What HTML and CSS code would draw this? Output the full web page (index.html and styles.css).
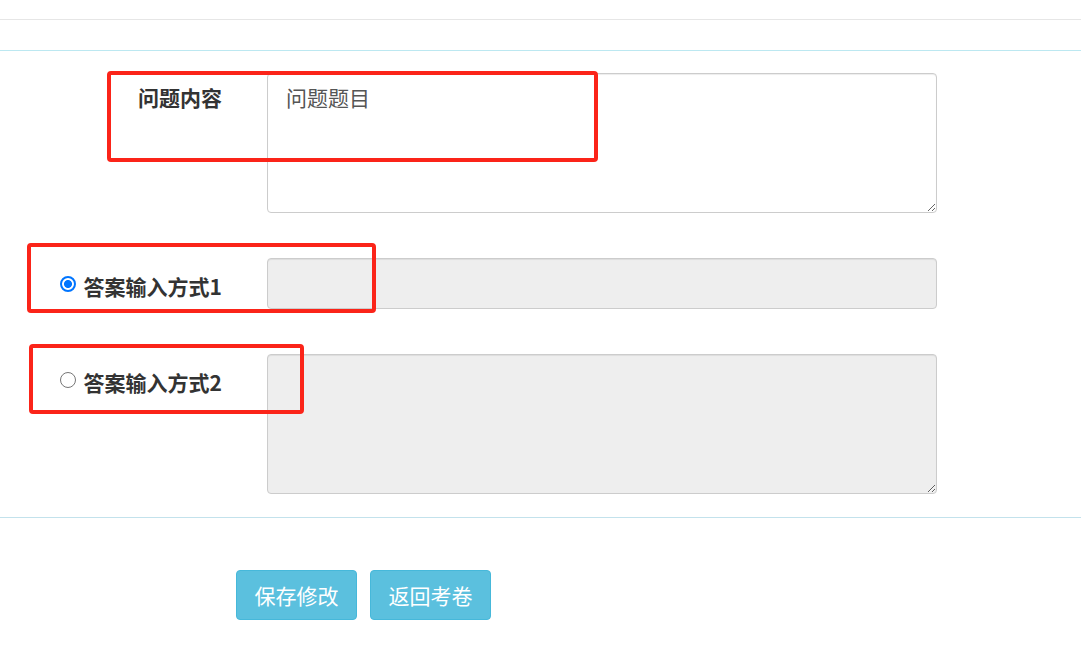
FILE: index.html
```html
<!DOCTYPE html>
<html lang="zh-CN">
<head>
<meta charset="utf-8">
<title>编辑问题</title>
<link rel="stylesheet" href="styles.css">
</head>
<body>
<div class="topbar"></div>
<div class="panel">
  <form class="form">
    <div class="row">
      <label class="label label-q">问题内容</label>
      <textarea class="field area">问题题目</textarea>
    </div>
    <div class="row">
      <label class="label label-r1"><input type="radio" name="mode" class="radio" checked><span>答案输入方式1</span></label>
      <input type="text" class="field line gray" readonly>
    </div>
    <div class="row">
      <label class="label label-r2"><input type="radio" name="mode" class="radio"><span>答案输入方式2</span></label>
      <textarea class="field area gray" readonly></textarea>
    </div>
  </form>
  <div class="actions">
    <button type="button" class="btn">保存修改</button>
    <button type="button" class="btn">返回考卷</button>
  </div>
</div>
<div class="mark mark1"></div>
<div class="mark mark2"></div>
<div class="mark mark3"></div>
</body>
</html>
```
FILE: styles.css
```css
html, body {
  margin: 0;
  background: #fff;
}
body {
  font-family: "Noto Sans CJK SC", "Microsoft YaHei", sans-serif;
  color: #333;
}
.topbar {
  height: 19px;
  border-bottom: 1px solid #e6e6e6;
}
.panel {
  margin-top: 30px;
  border-top: 1px solid #bce8f1;
}
.form {
  padding-top: 22px;
  display: flex;
  flex-direction: column;
  gap: 45px;
}
.row {
  display: grid;
  grid-template-columns: 222px 670px;
  column-gap: 45px;
  align-items: start;
}
.label {
  font-size: 21px;
  font-weight: bold;
  line-height: 28px;
  text-align: right;
  color: #333;
}
.label-q { padding-top: 10px; }
.label-r1, .label-r2 {
  display: flex;
  justify-content: flex-end;
  align-items: center;
  gap: 8px;
}
.label-r1 { padding-top: 14px; }
.label-r2 { padding-top: 14px; }
.radio {
  -webkit-appearance: none;
  appearance: none;
  box-sizing: border-box;
  width: 16px;
  height: 16px;
  margin: 0 0 5px 0;
  border: 1px solid #767676;
  border-radius: 50%;
  background: #fff;
}
.radio:checked {
  border: 2px solid #0075ff;
  background: radial-gradient(circle, #0075ff 0 3.6px, #fff 4.4px);
}
.field {
  box-sizing: border-box;
  width: 670px;
  border: 1px solid #ccc;
  border-radius: 4px;
  font-family: "Noto Sans CJK SC", "Microsoft YaHei", sans-serif;
  font-size: 21px;
  line-height: 28px;
  color: #555;
  background: #fff;
  outline: none;
  box-shadow: inset 0 1px 1px rgba(0,0,0,.075);
}
.area {
  height: 140px;
  padding: 9px 18px;
  resize: vertical;
  display: block;
}
.line {
  height: 51px;
  padding: 0 18px;
}
.gray { background: #eee; }
.actions {
  margin-top: 23px;
  border-top: 1px solid #c3e2ec;
  padding: 52px 0 0 236px;
  display: flex;
  gap: 13px;
}
.btn {
  width: 121px;
  height: 50px;
  padding: 0;
  font-family: "Noto Sans CJK SC", "Microsoft YaHei", sans-serif;
  font-size: 21px;
  color: #fff;
  background: #5bc0de;
  border: 1px solid #46b8da;
  border-radius: 4px;
}
.mark {
  position: absolute;
  box-sizing: border-box;
  border: 4px solid #fb2419;
  border-radius: 4px;
}
.mark1 { left: 107px; top: 71px; width: 491px; height: 91px; }
.mark2 { left: 27px; top: 243px; width: 349px; height: 70px; }
.mark3 { left: 29px; top: 344px; width: 275px; height: 70px; }
```
